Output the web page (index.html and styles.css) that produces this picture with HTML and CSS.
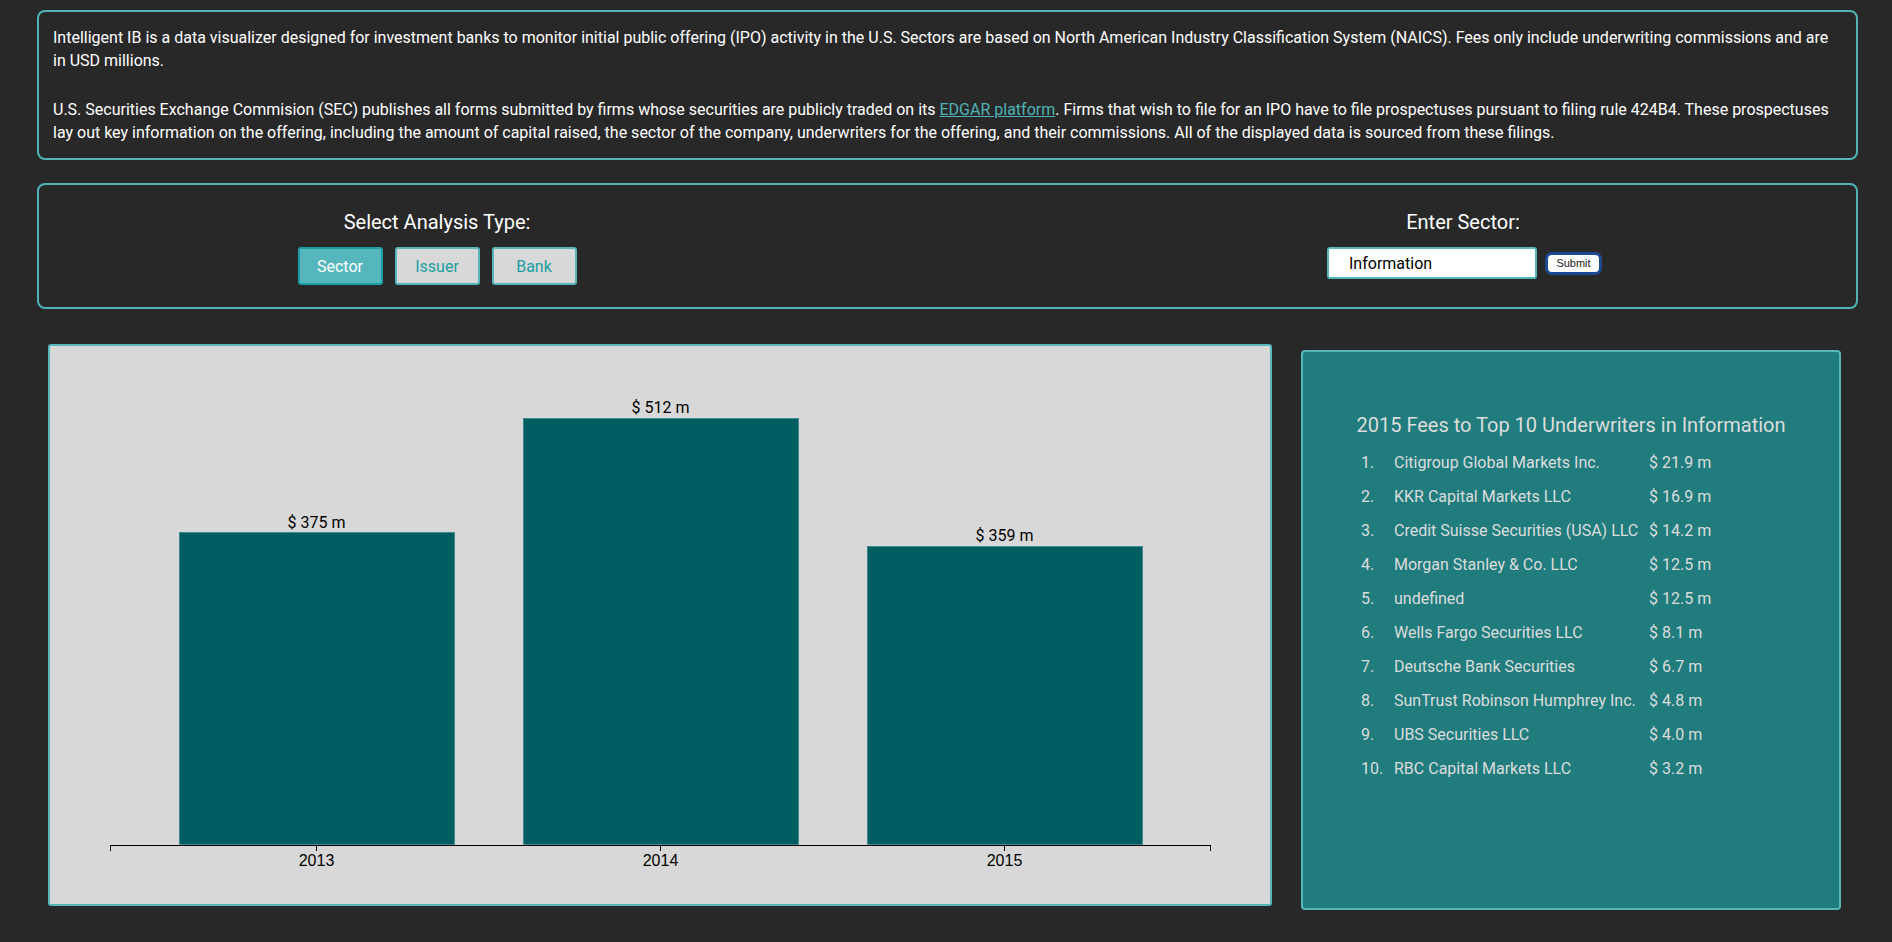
FILE: index.html
```html
<!DOCTYPE html>
<html>
<head>
<meta charset="utf-8">
<title>Intelligent IB</title>
<link rel="stylesheet" href="styles.css">
</head>
<body>
<div class="page">
  <section class="intro">
    <p>Intelligent IB is a data visualizer designed for investment banks to monitor initial public offering (IPO) activity in the U.S. Sectors are based on North American Industry Classification System (NAICS). Fees only include underwriting commissions and are in USD millions.</p>
    <p>U.S. Securities Exchange Commision (SEC) publishes all forms submitted by firms whose securities are publicly traded on its <a href="#">EDGAR platform</a>. Firms that wish to file for an IPO have to file prospectuses pursuant to filing rule 424B4. These prospectuses lay out key information on the offering, including the amount of capital raised, the sector of the company, underwriters for the offering, and their commissions. All of the displayed data is sourced from these filings.</p>
  </section>

  <section class="controls">
    <div class="control-col">
      <h3 class="control-title">Select Analysis Type:</h3>
      <div class="btn-group">
        <button class="type-btn active">Sector</button>
        <button class="type-btn">Issuer</button>
        <button class="type-btn">Bank</button>
      </div>
    </div>
    <div class="control-col">
      <h3 class="control-title">Enter Sector:</h3>
      <div class="input-group">
        <input class="sector-input" type="text" value="Information">
        <button class="submit-btn">Submit</button>
      </div>
    </div>
  </section>

  <div class="main-row">
    <div class="chart-panel">
      <svg class="chart" width="1220" height="558" viewBox="0 0 1220 558">
        <rect class="bar" x="129.5" y="186.5" width="275" height="312"></rect>
        <rect class="bar" x="473.5" y="72.5" width="275" height="426"></rect>
        <rect class="bar" x="817.5" y="200.5" width="275" height="298"></rect>
        <text class="bar-label" x="266.5" y="182">$ 375 m</text>
        <text class="bar-label" x="610.5" y="67">$ 512 m</text>
        <text class="bar-label" x="954.5" y="195">$ 359 m</text>
        <path class="axis" d="M60.5,505V499.5H1160.5V505"></path>
        <path class="axis" d="M266.5,499.5V505M610.5,499.5V505M954.5,499.5V505"></path>
        <text class="tick-label" x="266.5" y="520">2013</text>
        <text class="tick-label" x="610.5" y="520">2014</text>
        <text class="tick-label" x="954.5" y="520">2015</text>
      </svg>
    </div>

    <div class="fees-panel">
      <h2 class="fees-title">2015 Fees to Top 10 Underwriters in Information</h2>
      <table class="fees-table">
        <tr><td class="num">1.</td><td class="name">Citigroup Global Markets Inc.</td><td class="val">$ 21.9 m</td></tr>
        <tr><td class="num">2.</td><td class="name">KKR Capital Markets LLC</td><td class="val">$ 16.9 m</td></tr>
        <tr><td class="num">3.</td><td class="name">Credit Suisse Securities (USA) LLC</td><td class="val">$ 14.2 m</td></tr>
        <tr><td class="num">4.</td><td class="name">Morgan Stanley &amp; Co. LLC</td><td class="val">$ 12.5 m</td></tr>
        <tr><td class="num">5.</td><td class="name">undefined</td><td class="val">$ 12.5 m</td></tr>
        <tr><td class="num">6.</td><td class="name">Wells Fargo Securities LLC</td><td class="val">$ 8.1 m</td></tr>
        <tr><td class="num">7.</td><td class="name">Deutsche Bank Securities</td><td class="val">$ 6.7 m</td></tr>
        <tr><td class="num">8.</td><td class="name">SunTrust Robinson Humphrey Inc.</td><td class="val">$ 4.8 m</td></tr>
        <tr><td class="num">9.</td><td class="name">UBS Securities LLC</td><td class="val">$ 4.0 m</td></tr>
        <tr><td class="num">10.</td><td class="name">RBC Capital Markets LLC</td><td class="val">$ 3.2 m</td></tr>
      </table>
    </div>
  </div>
</div>
</body>
</html>
```

FILE: styles.css
```css
* { box-sizing: border-box; }

html, body {
  margin: 0;
  padding: 0;
  background: #282828;
}

body {
  font-family: Roboto, "Liberation Sans", Arial, sans-serif;
  color: #ffffff;
}

.page {
  padding: 10px 34px 0 37px;
}

.intro {
  border: 2px solid #4fb3b7;
  border-radius: 8px;
  padding: 14px 12px 14px 14px;
  font-size: 16px;
  line-height: 23px;
}

.intro p {
  margin: 0;
}

.intro p + p {
  margin-top: 26px;
}

.intro a {
  color: #4fb3b7;
  text-decoration: underline;
}

.controls {
  margin-top: 23px;
  height: 126px;
  border: 2px solid #4fb3b7;
  border-radius: 8px;
  display: grid;
  grid-template-columns: 796px 786px;
  justify-content: space-between;
  padding-top: 25px;
}

.control-col {
  display: flex;
  flex-direction: column;
  align-items: center;
}

.control-title {
  margin: 0;
  font-size: 20px;
  font-weight: 400;
  line-height: 24px;
  color: #ffffff;
}

.btn-group {
  margin-top: 13px;
  display: flex;
  gap: 12px;
}

.type-btn {
  width: 85px;
  height: 38px;
  border: 2px solid #55b7bb;
  border-radius: 3px;
  background: #d8d8d8;
  color: #1a9ea2;
  font-family: Roboto, "Liberation Sans", Arial, sans-serif;
  font-size: 16px;
  padding: 0;
}

.type-btn.active {
  background: #55b7bb;
  border-color: #1c9da1;
  color: #ffffff;
}

.input-group {
  margin-top: 13px;
  display: flex;
  align-items: center;
  gap: 11px;
}

.sector-input {
  width: 210px;
  height: 32px;
  border: 2px solid #55b7bb;
  border-radius: 3px;
  background: #ffffff;
  padding: 0 0 0 20px;
  font-family: Roboto, "Liberation Sans", Arial, sans-serif;
  font-size: 16px;
  color: #000000;
}

.submit-btn {
  width: 51px;
  height: 17px;
  border: none;
  border-radius: 4px;
  background: #ffffff;
  box-shadow: 0 0 0 3px #1c4993;
  font-family: "Liberation Sans", Arial, sans-serif;
  font-size: 11px;
  color: #222222;
  padding: 0;
  line-height: 17px;
}

.main-row {
  margin-top: 35px;
  display: flex;
  align-items: flex-start;
  padding-left: 11px;
}

.chart-panel {
  width: 1224px;
  height: 562px;
  background: #d8d8d8;
  border: 2px solid #55b7bb;
  border-radius: 3px;
}

.chart {
  display: block;
}

.bar {
  fill: #005d61;
  stroke: #3d8c8d;
  stroke-width: 1;
}

.bar-label {
  font-family: Roboto, "Liberation Sans", Arial, sans-serif;
  font-size: 16px;
  fill: #000000;
  text-anchor: middle;
}

.axis {
  fill: none;
  stroke: #000000;
  stroke-width: 1;
  shape-rendering: crispEdges;
}

.tick-label {
  font-family: "Liberation Sans", Arial, sans-serif;
  font-size: 16px;
  fill: #000000;
  text-anchor: middle;
}

.fees-panel {
  margin-top: 6px;
  margin-left: 29px;
  width: 540px;
  height: 560px;
  background: #217c7e;
  border: 2px solid #55b7bb;
  border-radius: 4px;
  padding-top: 61px;
  color: #dcdcdc;
}

.fees-title {
  margin: 0;
  font-size: 20px;
  font-weight: 400;
  line-height: 24px;
  text-align: center;
  color: #dcdcdc;
}

.fees-table {
  margin-top: 8px;
  margin-left: 58px;
  border-collapse: collapse;
  font-size: 16px;
}

.fees-table td {
  height: 34px;
  padding: 0;
  vertical-align: middle;
  white-space: nowrap;
}

.fees-table .num {
  width: 33px;
}

.fees-table .name {
  width: 255px;
}
```
